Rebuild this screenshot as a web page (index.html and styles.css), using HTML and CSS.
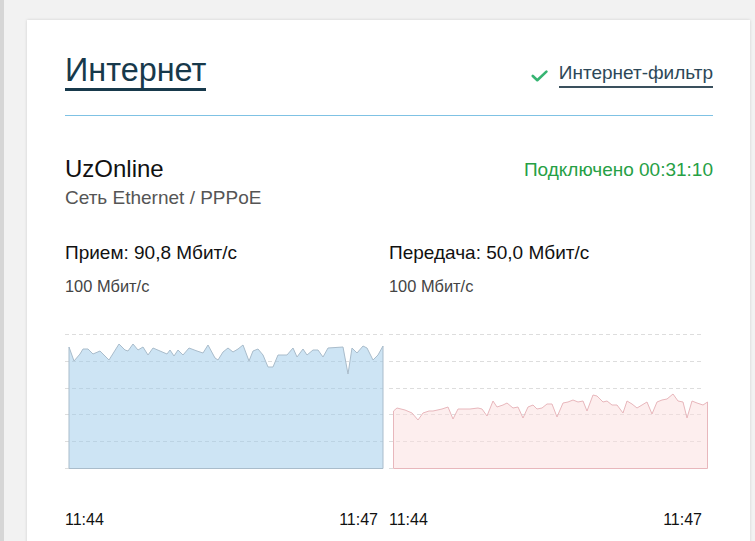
FILE: index.html
```html
<!DOCTYPE html>
<html lang="ru">
<head>
<meta charset="utf-8">
<title>Интернет</title>
<link rel="stylesheet" href="styles.css">
</head>
<body>
<div class="page">
  <div class="card">
    <header class="head">
      <h1 class="title"><span class="title-text">Интернет</span></h1>
      <a class="filter" href="#">
        <svg class="check" width="17" height="12" viewBox="0 0 17 12"><polyline points="1.8,6 6.3,10.2 15.4,1.6" fill="none" stroke="#36b472" stroke-width="2.6" stroke-linecap="round" stroke-linejoin="round"/></svg>
        <span class="filter-text">Интернет-фильтр</span>
      </a>
    </header>
    <div class="rule"></div>
    <section class="conn">
      <div class="conn-info">
        <div class="isp">UzOnline</div>
        <div class="type">Сеть Ethernet / PPPoE</div>
      </div>
      <div class="status">Подключено 00:31:10</div>
    </section>
    <section class="charts">
      <div class="chart">
        <div class="rate">Прием: 90,8 Мбит/с</div>
        <div class="max">100 Мбит/с</div>
        <svg class="graph" width="324" height="150" viewBox="65 325 324 150">
          <g class="grid">
            <line x1="65" x2="383" y1="332.5" y2="332.5"/>
            <line x1="65" x2="383" y1="359.5" y2="359.5"/>
            <line x1="65" x2="383" y1="386.5" y2="386.5"/>
            <line x1="65" x2="383" y1="412.5" y2="412.5"/>
            <line x1="65" x2="383" y1="439.5" y2="439.5"/>
            <line x1="65" x2="383" y1="466.5" y2="466.5"/>
          </g>
          <polygon class="area-rx" points="69,466.5 69,345 74,359 80,352 83,347 88,347 93,352 100,349 109,358 119,342 125,348 128,349 133,342 138,348 143,345 148,353 153,346 160,349 167,352 170,348 174,354 178,348 183,353 189,346 197,349 203,351 208,343 215,356 218,358 223,350 228,346 233,350 238,347 243,343 249,359 253,349 258,347 263,353 268,365 273,365 278,353 287,353 293,346 297,355 303,347 307,353 313,348 318,348 323,355 328,346 343,345 348,372 352,346 357,351 363,344 367,346 373,358 378,353 383,344 383,466.5"/>
        </svg>
        <div class="times"><span>11:44</span><span>11:47</span></div>
      </div>
      <div class="chart">
        <div class="rate">Передача: 50,0 Мбит/с</div>
        <div class="max">100 Мбит/с</div>
        <svg class="graph" width="324" height="150" viewBox="389 325 324 150">
          <g class="grid">
            <line x1="389" x2="703" y1="332.5" y2="332.5"/>
            <line x1="389" x2="703" y1="359.5" y2="359.5"/>
            <line x1="389" x2="703" y1="386.5" y2="386.5"/>
            <line x1="389" x2="703" y1="412.5" y2="412.5"/>
            <line x1="389" x2="703" y1="439.5" y2="439.5"/>
            <line x1="389" x2="703" y1="466.5" y2="466.5"/>
          </g>
          <polygon class="area-tx" points="393.5,466.5 393.5,409 397,406 405,408 412,411 418,418 423,411 429,409 433,409 442,407 448,405 453,417 458,407 470,407 478,406 482,407 487,414 493,399 497,405 503,403 507,401 513,406 518,405 523,416 528,405 533,403 537,407 542,406 547,402 552,402 557,415 563,401 568,400 573,398 578,400 583,399 587,409 593,393 597,394 603,400 607,399 612,403 617,403 623,411 627,399 632,402 637,406 642,403 647,400 652,412 657,400 662,398 667,397 673,392 678,399 683,400 687,416 692,399 697,401 703,403 707.5,400 707.5,466.5"/>
        </svg>
        <div class="times"><span>11:44</span><span>11:47</span></div>
      </div>
    </section>
  </div>
</div>
</body>
</html>
```

FILE: styles.css
```css
* { box-sizing: border-box; }
html, body { margin: 0; padding: 0; }
body {
  background: #f2f2f2;
  font-family: "Liberation Sans", Arial, sans-serif;
  color: #111;
  overflow: hidden;
  height: 541px;
}
.page {
  border-left: 4px solid #d6d6d6;
  padding: 20px 0 0 23px;
  height: 541px;
}
.card {
  width: 723px;
  background: #fff;
  box-shadow: 0 0 3px rgba(0, 0, 0, 0.14);
  padding: 32px 37px 60px 38px;
}
.head {
  display: flex;
  justify-content: space-between;
  align-items: flex-end;
}
.title {
  margin: 0;
  font-weight: normal;
  font-size: 32.4px;
  line-height: 36px;
}
.title-text {
  display: inline-block;
  color: #17394b;
  border-bottom: 3px solid #17394b;
}
.filter {
  display: flex;
  align-items: center;
  gap: 11px;
  text-decoration: none;
  margin-bottom: 3px;
}
.check { display: block; margin-top: 0; }
.filter-text {
  font-size: 19px;
  line-height: 20px;
  color: #2d4858;
  padding-bottom: 3px;
  border-bottom: 2px solid #3a505d;
}
.rule {
  height: 1px;
  background: #7fc2e4;
  margin-top: 24px;
}
.conn {
  display: flex;
  justify-content: space-between;
  align-items: flex-start;
  margin-top: 39px;
}
.isp {
  font-size: 24px;
  line-height: 28px;
  color: #111;
}
.type {
  font-size: 19px;
  line-height: 26px;
  margin-top: 2px;
  color: #555;
}
.status {
  font-size: 19px;
  line-height: 28px;
  margin-top: 1px;
  color: #26a045;
}
.charts {
  display: grid;
  grid-template-columns: 324px 324px;
  margin-top: 30px;
}
.rate {
  font-size: 19px;
  line-height: 24px;
  color: #111;
}
.max {
  font-size: 16.4px;
  line-height: 20px;
  margin-top: 11px;
  color: #444;
}
.graph {
  display: block;
  margin-top: 31px;
}
.grid line {
  stroke: #dddddd;
  stroke-width: 1;
  stroke-dasharray: 4 3;
}
.area-rx {
  fill: rgba(155, 201, 233, 0.5);
  stroke: #a9bccb;
  stroke-width: 1;
}
.area-tx {
  fill: rgba(251, 221, 221, 0.5);
  stroke: #e8b7bc;
  stroke-width: 1;
}
.times {
  display: flex;
  justify-content: space-between;
  width: 313px;
  margin-top: 33px;
  font-size: 16px;
  line-height: 20px;
  color: #111;
}
```
